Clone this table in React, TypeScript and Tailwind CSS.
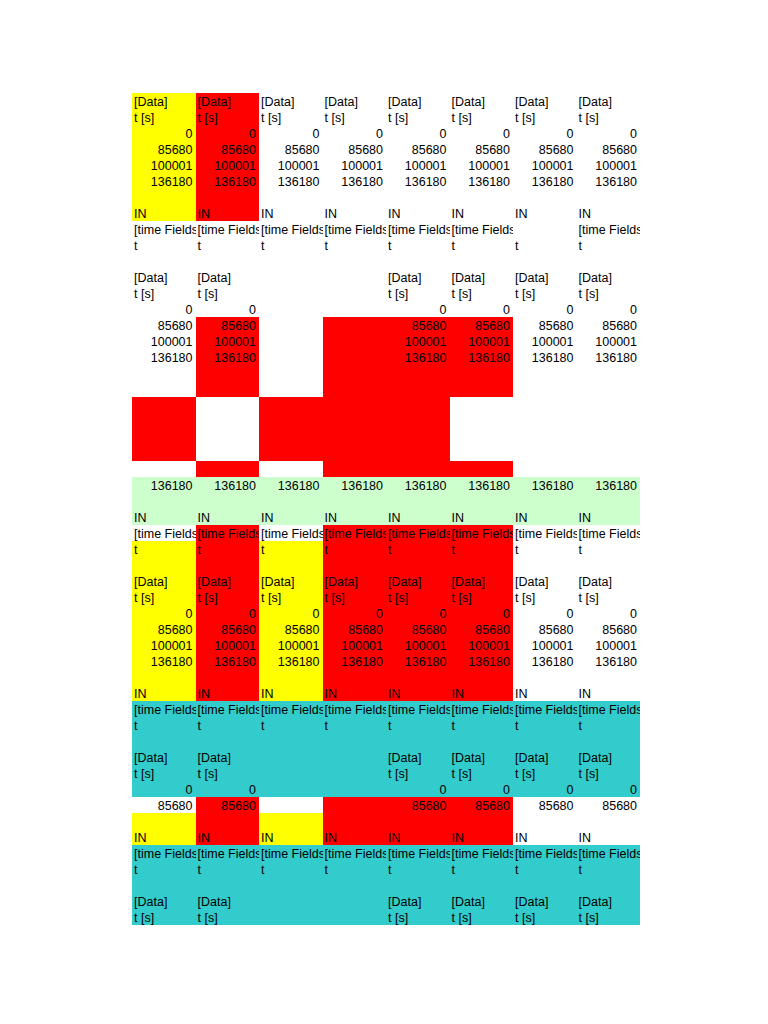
import React from 'react';

// Color codes per cell: W white, Y yellow, R red, G light green, C cyan
type Fill = 'W' | 'Y' | 'R' | 'G' | 'C';

const fillClass: Record<Fill, string> = {
  W: 'bg-white',
  Y: 'bg-[#ffff00]',
  R: 'bg-[#ff0000]',
  G: 'bg-[#ccffcc]',
  C: 'bg-[#33cccc]',
};

type Row = { text: string; cols: number[]; fills: Fill[]; right?: boolean };

const ALL = [0, 1, 2, 3, 4, 5, 6, 7];
const PART = [0, 1, 4, 5, 6, 7];
const NONE: number[] = [];

const top: Fill[] = ['Y', 'R', 'W', 'W', 'W', 'W', 'W', 'W'];
const white: Fill[] = ['W', 'W', 'W', 'W', 'W', 'W', 'W', 'W'];
const redA: Fill[] = ['W', 'R', 'W', 'R', 'R', 'R', 'W', 'W'];
const redB: Fill[] = ['R', 'W', 'R', 'R', 'R', 'W', 'W', 'W'];
const mixed: Fill[] = ['Y', 'R', 'Y', 'R', 'R', 'R', 'W', 'W'];
const green: Fill[] = ['G', 'G', 'G', 'G', 'G', 'G', 'G', 'G'];
const cyan: Fill[] = ['C', 'C', 'C', 'C', 'C', 'C', 'C', 'C'];

const rows: Row[] = [
  // bloco 1
  { text: '[Data]', cols: ALL, fills: top },
  { text: 't [s]', cols: ALL, fills: top },
  { text: '0', cols: ALL, fills: top, right: true },
  { text: '85680', cols: ALL, fills: top, right: true },
  { text: '100001', cols: ALL, fills: top, right: true },
  { text: '136180', cols: ALL, fills: top, right: true },
  { text: '', cols: NONE, fills: top },
  { text: 'IN', cols: ALL, fills: top },
  { text: '[time Fields]', cols: [0, 1, 2, 3, 4, 5, 7], fills: white },
  { text: 't', cols: ALL, fills: white },
  { text: '', cols: NONE, fills: white },
  // bloco 2
  { text: '[Data]', cols: PART, fills: white },
  { text: 't [s]', cols: PART, fills: white },
  { text: '0', cols: PART, fills: white, right: true },
  { text: '85680', cols: PART, fills: redA, right: true },
  { text: '100001', cols: PART, fills: redA, right: true },
  { text: '136180', cols: PART, fills: redA, right: true },
  { text: '', cols: NONE, fills: redA },
  { text: '', cols: NONE, fills: redA },
  { text: '', cols: NONE, fills: redB },
  { text: '', cols: NONE, fills: redB },
  { text: '', cols: NONE, fills: redB },
  { text: '', cols: NONE, fills: redB },
  { text: '', cols: NONE, fills: redA },
  { text: '136180', cols: ALL, fills: green, right: true },
  { text: '', cols: NONE, fills: green },
  { text: 'IN', cols: ALL, fills: green },
  { text: '[time Fields]', cols: ALL, fills: redA },
  { text: 't', cols: ALL, fills: mixed },
  { text: '', cols: NONE, fills: mixed },
  // bloco 3
  { text: '[Data]', cols: ALL, fills: mixed },
  { text: 't [s]', cols: ALL, fills: mixed },
  { text: '0', cols: ALL, fills: mixed, right: true },
  { text: '85680', cols: ALL, fills: mixed, right: true },
  { text: '100001', cols: ALL, fills: mixed, right: true },
  { text: '136180', cols: ALL, fills: mixed, right: true },
  { text: '', cols: NONE, fills: mixed },
  { text: 'IN', cols: ALL, fills: mixed },
  { text: '[time Fields]', cols: ALL, fills: cyan },
  { text: 't', cols: ALL, fills: cyan },
  { text: '', cols: NONE, fills: cyan },
  // bloco 4
  { text: '[Data]', cols: PART, fills: cyan },
  { text: 't [s]', cols: PART, fills: cyan },
  { text: '0', cols: PART, fills: cyan, right: true },
  { text: '85680', cols: PART, fills: redA, right: true },
  { text: '', cols: NONE, fills: mixed },
  { text: 'IN', cols: ALL, fills: mixed },
  { text: '[time Fields]', cols: ALL, fills: cyan },
  { text: 't', cols: ALL, fills: cyan },
  { text: '', cols: NONE, fills: cyan },
  // bloco 5
  { text: '[Data]', cols: PART, fills: cyan },
  { text: 't [s]', cols: PART, fills: cyan },
];

export default function App() {
  return (
    <div
      className="min-h-[1024px] w-[768px] bg-white pl-[132px] pt-[93px] text-[12.5px] leading-[16px] text-black"
      style={{ fontFamily: '"Liberation Sans", Arial, sans-serif' }}
    >
      <div className="flex flex-col">
        {rows.map((row, r) => (
          <div key={r} className="grid h-[16px] grid-cols-[repeat(8,63.5px)]">
            {row.fills.map((fill, c) => (
              <div
                key={c}
                className={`h-[16px] overflow-hidden whitespace-nowrap pt-px ${fillClass[fill]} ${
                  row.right ? 'pr-[3px] text-right' : 'pl-[2px] text-left'
                }`}
              >
                {row.cols.includes(c) ? row.text : ''}
              </div>
            ))}
          </div>
        ))}
      </div>
    </div>
  );
}
